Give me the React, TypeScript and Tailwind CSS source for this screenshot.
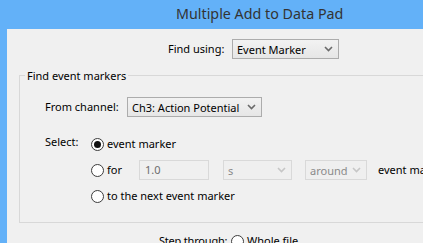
import React from "react";

const font = { fontFamily: '"Noto Sans", Arial, sans-serif' };

function Chevron({ disabled }: { disabled?: boolean }) {
  return (
    <svg width="9" height="6" viewBox="0 0 9 6" className="shrink-0">
      <path
        d="M1 1 L4.5 4.5 L8 1"
        fill="none"
        stroke={disabled ? "#c6c6c6" : "#6a6a6a"}
        strokeWidth="1.6"
      />
    </svg>
  );
}

function Select({ value, w, disabled }: { value: string; w: string; disabled?: boolean }) {
  return (
    <div
      className={
        disabled
          ? `${w} h-[20px] flex items-center justify-between pl-[4px] pr-[5px] border border-[#d9d9d9] bg-[#efefef] text-[#8a8a8a] whitespace-nowrap`
          : `${w} h-[20px] flex items-center justify-between pl-[4px] pr-[5px] border border-[#acacac] bg-gradient-to-b from-[#f2f2f2] to-[#e6e6e6] text-[#000] whitespace-nowrap`
      }
    >
      <span className="leading-none">{value}</span>
      <Chevron disabled={disabled} />
    </div>
  );
}

function Radio({ checked }: { checked?: boolean }) {
  return (
    <div className="w-[13px] h-[13px] rounded-full border border-[#3c3c3c] bg-white flex items-center justify-center shrink-0">
      {checked && <div className="w-[7px] h-[7px] rounded-full bg-[#111]" />}
    </div>
  );
}

export default function App() {
  return (
    <div
      className="w-[423px] h-[243px] overflow-hidden bg-[#63b1f8] flex flex-col text-[11px] text-black"
      style={font}
    >
      <div className="h-[29px] shrink-0 flex items-center pl-[176px] text-[14.3px] text-[#333] leading-none whitespace-nowrap">
        Multiple Add to Data Pad
      </div>
      <div className="flex-1 ml-[7px] bg-[#f0f0f0] flex flex-col">
        <div className="flex items-center mt-[10px] pl-[161px] whitespace-nowrap">
          <span className="w-[64px]">Find using:</span>
          <Select value="Event Marker" w="w-[107px]" />
        </div>
        <fieldset className="mt-[9px] ml-[12px] w-[500px] border border-[#d8d8d8]">
          <legend className="ml-[5px] px-[2px] leading-[15px]">Find event markers</legend>
          <div className="pl-[25px] pt-[14px] pb-[16px]">
            <div className="flex items-center whitespace-nowrap">
              <span className="w-[82px]">From channel:</span>
              <Select value="Ch3: Action Potential" w="w-[135px]" />
            </div>
            <div className="mt-[17px] grid grid-cols-[46px_auto] gap-y-[6px] justify-start whitespace-nowrap">
              <div className="h-[20px] flex items-center -mt-[2px]">Select:</div>
              <div className="h-[20px] flex items-center gap-[3px]">
                <Radio checked />
                <span>event marker</span>
              </div>
              <div />
              <div className="h-[20px] flex items-center">
                <Radio />
                <span className="ml-[3px] w-[32px]">for</span>
                <div className="w-[70px] h-[20px] border border-[#d9d9d9] bg-[#f0f0f0] text-[#6d6d6d] flex items-center pl-[5px]">
                  1.0
                </div>
                <div className="ml-[14px]">
                  <Select value="s" w="w-[69px]" disabled />
                </div>
                <div className="ml-[13px]">
                  <Select value="around" w="w-[62px]" disabled />
                </div>
                <span className="ml-[11px]">event markers</span>
              </div>
              <div />
              <div className="h-[20px] flex items-center gap-[3px]">
                <Radio />
                <span>to the next event marker</span>
              </div>
            </div>
          </div>
        </fieldset>
        <div className="mt-[8px] h-[20px] flex items-center pl-[152px] whitespace-nowrap">
          <span className="w-[72px] tracking-[-0.2px]">Step through:</span>
          <Radio />
          <span className="ml-[3px]">Whole file</span>
        </div>
      </div>
    </div>
  );
}
